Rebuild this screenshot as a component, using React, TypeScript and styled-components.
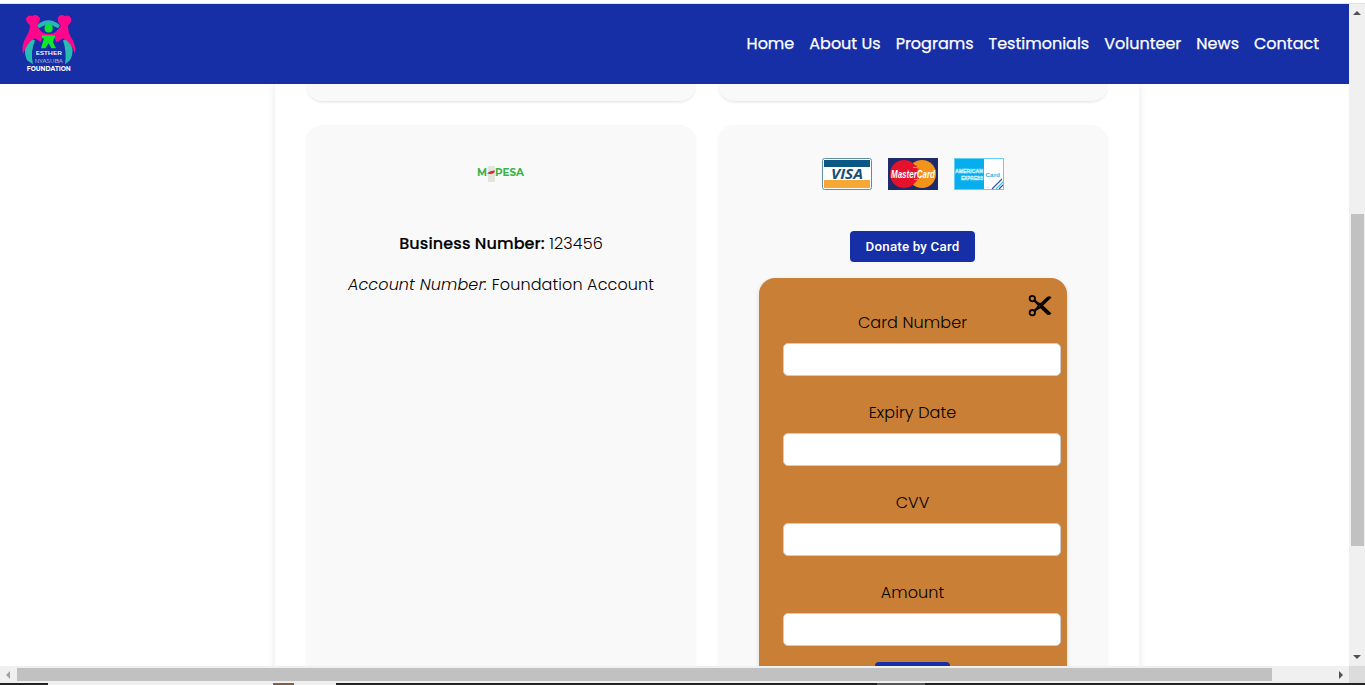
import React from 'react';
import styled, { createGlobalStyle } from 'styled-components';

const Global = createGlobalStyle`
  * { box-sizing: border-box; }
  body { margin: 0; background: #fff; overflow: hidden; }
`;

const Window = styled.div`
  width: 1365px;
  height: 685px;
  display: flex;
  flex-direction: column;
  overflow: hidden;
  background: #fff;
  color: #000;
  font-family: Poppins, Inter, sans-serif;
  font-size: 16px;
`;
const TopEdge = styled.div`
  height: 4px;
  flex: none;
  border-bottom: 1px solid #dfe1e5;
`;
const Viewport = styled.div`
  display: flex;
  height: 662px;
  flex: none;
`;
const Page = styled.div`
  width: 1349px;
  height: 662px;
  overflow: hidden;
  display: flex;
  flex-direction: column;
`;
const Header = styled.header`
  height: 80px;
  flex: none;
  background: #172fa6;
  display: flex;
  justify-content: space-between;
  align-items: center;
  padding: 0 30px 0 20px;
  z-index: 1;
`;
const Nav = styled.nav`
  display: flex;
  gap: 15px;
`;
const NavLink = styled.a`
  color: #fff;
  font-weight: 400;
  line-height: 24px;
  white-space: nowrap;
  -webkit-text-stroke: 0.25px #fff;
`;
const Container = styled.main`
  width: 864px;
  height: 1000px;
  flex: none;
  margin-left: 275px;
  padding: 0 31px;
  box-shadow: 0 0 8px rgba(0, 0, 0, 0.1);
`;
const Grid = styled.div`
  display: grid;
  grid-template-columns: 390px 390px;
  grid-template-rows: 17px 800px;
  gap: 24px 22px;
`;
const Card = styled.section<{ $ended?: boolean }>`
  background: #f9f9f9;
  border-radius: ${p => (p.$ended ? '0 0 16px 16px' : '16px')};
  box-shadow: 0 2px 3px -1px rgba(0, 0, 0, 0.12);
  display: flex;
  flex-direction: column;
  align-items: center;
`;
const MpesaLogo = styled.svg`
  margin: 39px 0 46px;
`;
const Line = styled.p`
  margin: 0 0 17px;
  font-weight: 300;
  line-height: 24px;
  letter-spacing: 0.1px;
  white-space: nowrap;
  strong { font-weight: 500; -webkit-text-stroke: 0.15px #000; }
`;
const Brands = styled.div`
  display: flex;
  gap: 16px;
  margin: 33px 0 41px;
  svg { display: block; }
`;
const DonateButton = styled.button`
  width: 125px;
  height: 31px;
  flex: none;
  border: 0;
  padding: 0;
  margin-right: 1px;
  border-radius: 4px;
  background: #172fa6;
  color: #fff;
  font: 500 13.33px Roboto, sans-serif;
  letter-spacing: 0.2px;
`;
const Form = styled.form`
  position: relative;
  width: 308px;
  height: 480px;
  margin-top: 16px;
  padding: 33px 24px 0;
  border-radius: 16px;
  background: #c97f35;
  box-shadow: 0 2px 5px rgba(0, 0, 0, 0.12);
  display: flex;
  flex-direction: column;
  align-items: center;
`;
const Close = styled.svg`
  position: absolute;
  left: 269px;
  top: 16px;
`;
const Field = styled.label`
  width: 260px;
  height: 90px;
  flex: none;
  display: flex;
  flex-direction: column;
  font-weight: 300;
  line-height: 24px;
  letter-spacing: 0.1px;
`;
const FieldName = styled.span`
  width: 259px;
  text-align: center;
`;
const Input = styled.input`
  width: 278px;
  height: 33px;
  margin-top: 8px;
  border: 1px solid #ccc;
  border-radius: 5px;
  background: #fff;
`;
const Submit = styled(DonateButton)`
  width: 75px;
  margin-top: -9px;
`;
const VBar = styled.div`
  width: 16px;
  background: #f0f0f0;
  display: flex;
  flex-direction: column;
  align-items: center;
  padding-top: 7px;
  svg { flex: none; }
`;
const VThumb = styled.div`
  width: 13px;
  height: 332px;
  flex: none;
  margin: 199px 0 109px;
  background: #c1c1c1;
`;
const HBar = styled.div`
  height: 17px;
  flex: none;
  background: #f0f0f0;
  display: flex;
  align-items: center;
  padding-left: 6px;
  svg { flex: none; }
`;
const HThumb = styled.div`
  width: 1255px;
  height: 13px;
  flex: none;
  margin: 0 67px 0 7px;
  background: #c1c1c1;
`;
const Corner = styled.div`
  width: 16px;
  height: 17px;
  margin-left: auto;
  background: #dcdcdc;
`;
const Taskbar = styled.div`
  height: 2px;
  flex: none;
  display: flex;
  background: #222325;
`;
const Strip = styled.div<{ $w: number; $c: string }>`
  width: ${p => p.$w}px;
  background: ${p => p.$c};
`;

const links = ['Home', 'About Us', 'Programs', 'Testimonials', 'Volunteer', 'News', 'Contact'];
const fields = ['Card Number', 'Expiry Date', 'CVV', 'Amount'];

const Logo = () => (
  <svg width="58" height="62" viewBox="20 12.8 58 62" fontFamily="Montserrat, Inter, sans-serif" textAnchor="middle" fill="#fff">
    <path d="M37 25Q48 15 60 25L58 28Q48 21 39 28Z" fill="#25b8b5" />
    <path d="M29 38L35 40Q30 52 33 64L27 60Q22 50 29 38ZM68 38L63 40Q67 52 65 64L70 60Q76 50 68 38Z" fill="#25bdb2" />
    <path d="M26 18Q29 14 32 16Q37 13 40 18Q40 22 37 25Q40 32 46 33.5H52Q57 32 61 25Q57 22 58 17Q61 13 65 16Q69 14 71 18Q72 22 68 25Q68 32 71 37Q76 44 75 53Q71 42 63 38L57 42Q54 39 55 35H43L41 42L35 38Q27 42 23 54Q21 45 26 37Q30 31 30 25Q26 22 26 18Z" fill="#ff078d" />
    <circle cx="48.6" cy="28.2" r="4.1" fill="#12e62b" />
    <path d="M42 35H55V38H54L53 42L56 48H51.5L48.5 43L45.5 48H41L44 38H42Z" fill="#12e62b" />
    <text x="48.8" y="55.2" fontSize="6.2" fontWeight="600" textLength="26" lengthAdjust="spacingAndGlyphs">ESTHER</text>
    <text x="48.8" y="63.2" fontSize="6.4" fontWeight="300" textLength="28" lengthAdjust="spacingAndGlyphs">NYASUBA</text>
    <text x="48.8" y="71.2" fontSize="6.2" fontWeight="700" textLength="44" lengthAdjust="spacingAndGlyphs">FOUNDATION</text>
  </svg>
);

const Visa = () => (
  <svg width="50" height="32" viewBox="0 0 50 32">
    <rect x=".5" y=".5" width="49" height="31" rx="2" fill="#fff" stroke="#608caa" />
    <path d="M2 2H48V9H2Z" fill="#0d5784" />
    <path d="M2 22H48V30H2Z" fill="#f6a735" />
    <text x="25" y="20.6" textAnchor="middle" textLength="32" lengthAdjust="spacingAndGlyphs" fontFamily="Open Sans, sans-serif" fontSize="14" fontWeight="700" fontStyle="italic" fill="#164f78">VISA</text>
  </svg>
);
const MasterCard = () => (
  <svg width="50" height="32" viewBox="0 0 50 32">
    <rect width="50" height="32" fill="#1d2b6c" />
    <circle cx="34" cy="16" r="14" fill="#f39319" />
    <circle cx="16" cy="16" r="14" fill="#e5122b" />
    <path d="M23 8H29M23 11H31M23 20H31M23 23H29" stroke="#e5122b" strokeWidth="1.2" />
    <path d="M25 9.5H29M26 21.5H30" stroke="#f39319" />
    <text x="25" y="20" textAnchor="middle" textLength="44" lengthAdjust="spacingAndGlyphs" fontFamily="Liberation Sans, sans-serif" fontSize="10" fontWeight="700" fontStyle="italic" fill="#fff">MasterCard</text>
  </svg>
);
const Amex = () => (
  <svg width="50" height="32" viewBox="0 0 50 32" fontFamily="Liberation Sans, sans-serif" fontWeight="700">
    <rect x=".5" y=".5" width="49" height="31" fill="#fff" stroke="#63cff3" />
    <path d="M1 1H30V31H1Z" fill="#06aeee" />
    <g fill="#06aeee" stroke="#c9f1ff" strokeWidth=".6">
      <text x="1" y="15.3" fontSize="5.8" textLength="28" lengthAdjust="spacingAndGlyphs">AMERICAN</text>
      <text x="7" y="21.9" fontSize="5.8" textLength="22" lengthAdjust="spacingAndGlyphs">EXPRESS</text>
    </g>
    <text x="31.5" y="19" fontSize="6.2" textLength="14.5" lengthAdjust="spacingAndGlyphs" fill="#24b5e7">Card</text>
    <path d="M38 31L48 21M45 31L49 27" stroke="#3556a0" strokeWidth="1.2" />
    <path d="M42 31L49 24" stroke="#42bfe4" strokeWidth="1.2" />
    <circle cx="33.5" cy="29" r=".8" fill="#8edcf4" />
  </svg>
);

export default function App() {
  return (
    <Window>
      <Global />
      <TopEdge />
      <Viewport>
        <Page>
          <Header>
            <Logo />
            <Nav>
              {links.map(t => <NavLink key={t}>{t}</NavLink>)}
            </Nav>
          </Header>
          <Container>
            <Grid>
              <Card $ended />
              <Card $ended />
              <Card>
                <MpesaLogo width="50" height="22" viewBox="0 0 50 22" fontFamily="Montserrat, Lato, sans-serif" fontWeight="700" fontSize="10.5" fill="#37b34a">
                  <rect x="12" y="2" width="7" height="16" rx="1" fill="#e0e4dc" />
                  <text x="1" y="12" textLength="10" lengthAdjust="spacingAndGlyphs">M</text>
                  <path d="M11 9.5Q14 6.5 19 6.5L18 9Q15 10.5 11 9.5Z" fill="#d52a38" />
                  <text x="19" y="12" textLength="29" lengthAdjust="spacingAndGlyphs">PESA</text>
                </MpesaLogo>
                <Line><strong>Business Number:</strong> 123456</Line>
                <Line><em>Account Number:</em> Foundation Account</Line>
              </Card>
              <Card>
                <Brands><Visa /><MasterCard /><Amex /></Brands>
                <DonateButton type="button">Donate by Card</DonateButton>
                <Form>
                  <Close width="24" height="24" viewBox="0 0 24 24" fill="none" stroke="#080400">
                    <circle cx="4.3" cy="4.6" r="2.7" strokeWidth="1.8" />
                    <circle cx="4.3" cy="18.7" r="2.7" strokeWidth="1.8" />
                    <path d="M6.3 6.5L11 10.5M6.3 17L11 13" strokeWidth="2.4" />
                    <path d="M8.5 13L19 3Q21.5 1.5 23.5 3.5L12.5 14L10 15.5ZM8.5 10.5L12 8.5L23.5 19.5Q21 22 19 20.5Z" fill="#080400" stroke="none" />
                    <circle cx="11.5" cy="12" r=".6" fill="#765027" stroke="none" />
                  </Close>
                  {fields.map(t => (
                    <Field key={t}><FieldName>{t}</FieldName><Input /></Field>
                  ))}
                  <Submit type="button" aria-label="Submit" />
                </Form>
              </Card>
            </Grid>
          </Container>
        </Page>
        <VBar>
          <svg width="8" height="4"><path d="M0 4L4 0L8 4Z" fill="#505050" /></svg>
          <VThumb />
          <svg width="8" height="4"><path d="M0 0L4 4L8 0Z" fill="#505050" /></svg>
        </VBar>
      </Viewport>
      <HBar>
        <svg width="4" height="8"><path d="M4 0L0 4L4 8Z" fill="#a3a3a3" /></svg>
        <HThumb />
        <svg width="4" height="8"><path d="M0 0L4 4L0 8Z" fill="#505050" /></svg>
        <Corner />
      </HBar>
      <Taskbar>
        <Strip $w={48} $c="#222325" />
        <Strip $w={225} $c="#eeeeee" />
        <Strip $w={21} $c="#80604c" />
        <Strip $w={42} $c="#eeeeee" />
        <Strip $w={541} $c="#222325" />
        <Strip $w={48} $c="#555655" />
      </Taskbar>
    </Window>
  );
}
